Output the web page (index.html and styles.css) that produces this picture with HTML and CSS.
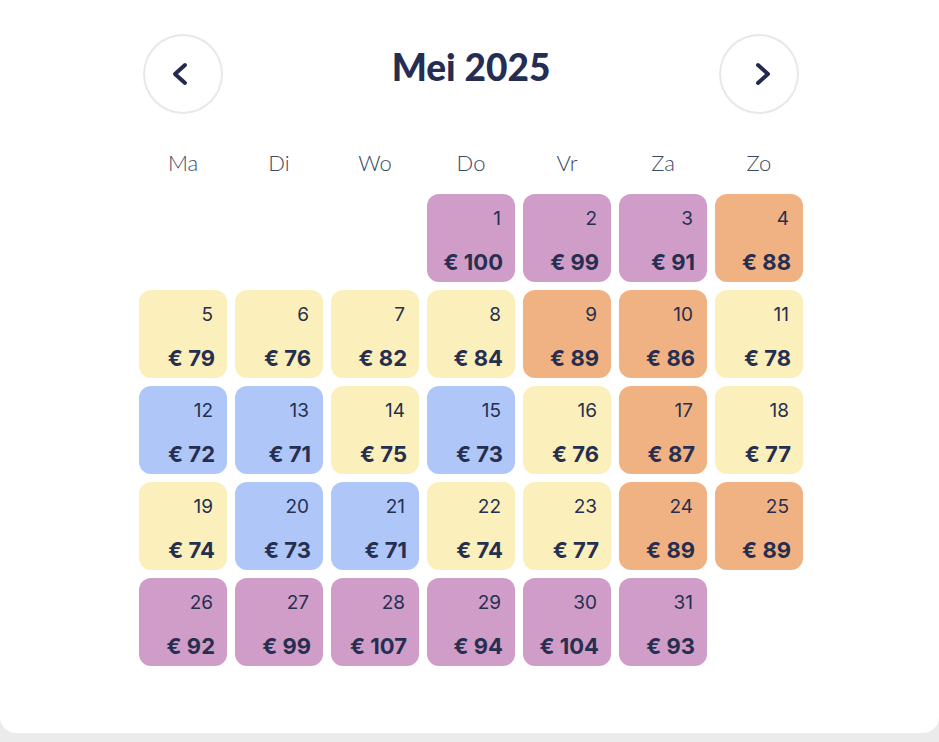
FILE: index.html
```html
<!DOCTYPE html>
<html lang="nl">
<head>
<meta charset="utf-8">
<title>Mei 2025</title>
<link rel="stylesheet" href="styles.css">
</head>
<body>
<div class="card">
  <div class="calendar">
    <div class="header">
      <button class="nav" aria-label="Vorige maand">
        <svg width="80" height="80" viewBox="0 0 80 80"><path d="M42 31 L32 40 L42 49" /></svg>
      </button>
      <h1 class="title">Mei 2025</h1>
      <button class="nav" aria-label="Volgende maand">
        <svg width="80" height="80" viewBox="0 0 80 80"><path d="M39 31 L49 40 L39 49" /></svg>
      </button>
    </div>
    <div class="weekdays">
      <span>Ma</span><span>Di</span><span>Wo</span><span>Do</span><span>Vr</span><span>Za</span><span>Zo</span>
    </div>
    <div class="grid">
      <div class="empty"></div><div class="empty"></div><div class="empty"></div>
      <div class="day purple"><span class="num">1</span><span class="price">€ 100</span></div>
      <div class="day purple"><span class="num">2</span><span class="price">€ 99</span></div>
      <div class="day purple"><span class="num">3</span><span class="price">€ 91</span></div>
      <div class="day orange"><span class="num">4</span><span class="price">€ 88</span></div>

      <div class="day yellow"><span class="num">5</span><span class="price">€ 79</span></div>
      <div class="day yellow"><span class="num">6</span><span class="price">€ 76</span></div>
      <div class="day yellow"><span class="num">7</span><span class="price">€ 82</span></div>
      <div class="day yellow"><span class="num">8</span><span class="price">€ 84</span></div>
      <div class="day orange"><span class="num">9</span><span class="price">€ 89</span></div>
      <div class="day orange"><span class="num">10</span><span class="price">€ 86</span></div>
      <div class="day yellow"><span class="num">11</span><span class="price">€ 78</span></div>

      <div class="day blue"><span class="num">12</span><span class="price">€ 72</span></div>
      <div class="day blue"><span class="num">13</span><span class="price">€ 71</span></div>
      <div class="day yellow"><span class="num">14</span><span class="price">€ 75</span></div>
      <div class="day blue"><span class="num">15</span><span class="price">€ 73</span></div>
      <div class="day yellow"><span class="num">16</span><span class="price">€ 76</span></div>
      <div class="day orange"><span class="num">17</span><span class="price">€ 87</span></div>
      <div class="day yellow"><span class="num">18</span><span class="price">€ 77</span></div>

      <div class="day yellow"><span class="num">19</span><span class="price">€ 74</span></div>
      <div class="day blue"><span class="num">20</span><span class="price">€ 73</span></div>
      <div class="day blue"><span class="num">21</span><span class="price">€ 71</span></div>
      <div class="day yellow"><span class="num">22</span><span class="price">€ 74</span></div>
      <div class="day yellow"><span class="num">23</span><span class="price">€ 77</span></div>
      <div class="day orange"><span class="num">24</span><span class="price">€ 89</span></div>
      <div class="day orange"><span class="num">25</span><span class="price">€ 89</span></div>

      <div class="day purple"><span class="num">26</span><span class="price">€ 92</span></div>
      <div class="day purple"><span class="num">27</span><span class="price">€ 99</span></div>
      <div class="day purple"><span class="num">28</span><span class="price">€ 107</span></div>
      <div class="day purple"><span class="num">29</span><span class="price">€ 94</span></div>
      <div class="day purple"><span class="num">30</span><span class="price">€ 104</span></div>
      <div class="day purple"><span class="num">31</span><span class="price">€ 93</span></div>
    </div>
  </div>
</div>
</body>
</html>
```
FILE: styles.css
```css
html, body {
  margin: 0;
  padding: 0;
  background: #ebebec;
}
body {
  font-family: Lato, "Noto Sans", sans-serif;
  color: #262f50;
}
.card {
  background: #ffffff;
  height: 733px;
  border-radius: 0 0 16px 16px;
  box-sizing: border-box;
  padding-top: 34px;
}
.calendar {
  width: 664px;
  margin-left: 139px;
}
.header {
  display: flex;
  justify-content: space-between;
  align-items: flex-start;
  padding: 0 4px;
  height: 80px;
}
.nav {
  width: 80px;
  height: 80px;
  padding: 0;
  margin: 0;
  border: none;
  border-radius: 50%;
  background: #fff;
  box-shadow: inset 0 0 0 2px #e5e8ed;
  display: flex;
  cursor: pointer;
}
.nav svg {
  display: block;
}
.nav path {
  fill: none;
  stroke: #232a4d;
  stroke-width: 4;
  stroke-linecap: round;
  stroke-linejoin: round;
}
.title {
  margin: 11px 0 0;
  font-family: Lato, sans-serif;
  font-weight: 900;
  font-size: 37px;
  line-height: 44px;
  color: #252e52;
}
.weekdays {
  display: grid;
  grid-template-columns: repeat(7, 88px);
  column-gap: 8px;
  margin-top: 35px;
  margin-bottom: 17px;
  height: 28px;
}
.weekdays span {
  text-align: center;
  font-family: Lato, sans-serif;
  font-weight: 300;
  font-size: 22px;
  line-height: 28px;
  color: #3c4864;
}
.grid {
  display: grid;
  grid-template-columns: repeat(7, 88px);
  grid-auto-rows: 88px;
  gap: 8px;
}
.day {
  border-radius: 12px;
  display: flex;
  flex-direction: column;
  justify-content: space-between;
  align-items: flex-end;
  padding: 14px 12px 8px;
  box-sizing: border-box;
  font-family: Inter, Roboto, sans-serif;
  color: #262f50;
}
.num {
  font-size: 19px;
  line-height: 22px;
  font-weight: 400;
  margin-right: 2px;
}
.price {
  font-size: 22px;
  line-height: 24px;
  font-weight: 700;
}
.purple { background: #cf9dc8; }
.orange { background: #f1b283; }
.yellow { background: #fbefbb; }
.blue { background: #afc6f9; }
```
